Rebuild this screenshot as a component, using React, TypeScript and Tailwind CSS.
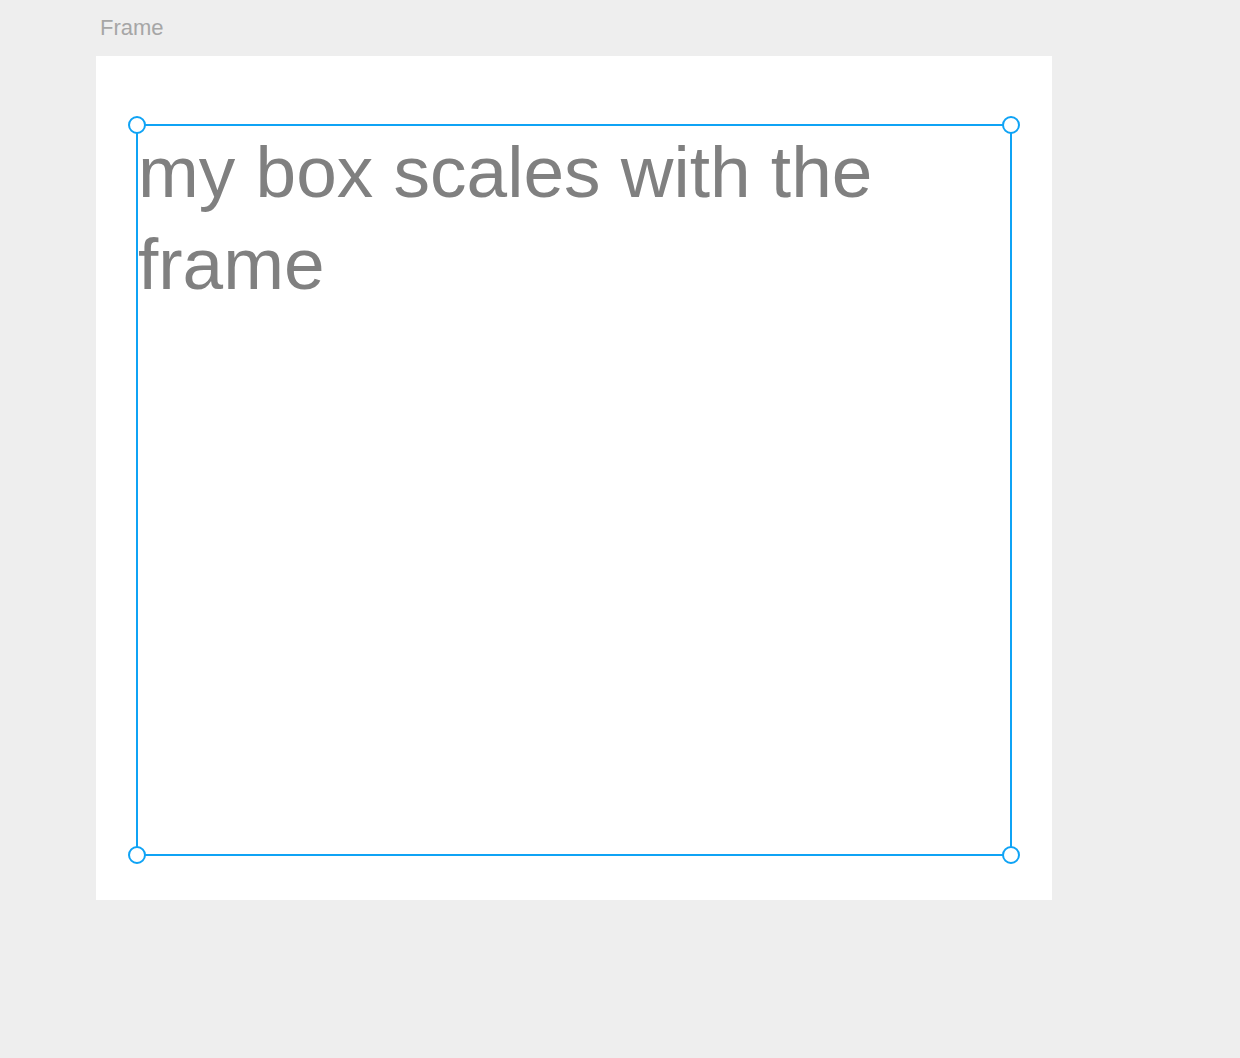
export default function App() {
  const handles = [
    "-top-[10px] -left-[10px]",
    "-top-[10px] -right-[10px]",
    "-bottom-[10px] -left-[10px]",
    "-bottom-[10px] -right-[10px]",
  ];
  return (
    <div className="min-h-screen bg-[#eeeeee] pt-[14px] pl-[96px] font-['Liberation_Sans',Arial,sans-serif]">
      {/* Frame label */}
      <div className="pl-1 mb-[14px] text-[22px] leading-[28px] text-[#a6a6a6]">Frame</div>

      {/* Frame canvas */}
      <div className="w-[956px] h-[844px] bg-white pt-[68px] pl-[40px]">
        <div className="relative w-[876px] h-[732px] border-2 border-[#0fa3f5]">
          <p className="text-[73px] leading-[92px] text-[#808080]">my box scales with the frame</p>
          {handles.map((pos) => (
            <span
              key={pos}
              className={`absolute ${pos} w-[18px] h-[18px] rounded-full border-2 border-[#0fa3f5] bg-white`}
            />
          ))}
        </div>
      </div>
    </div>
  );
}
